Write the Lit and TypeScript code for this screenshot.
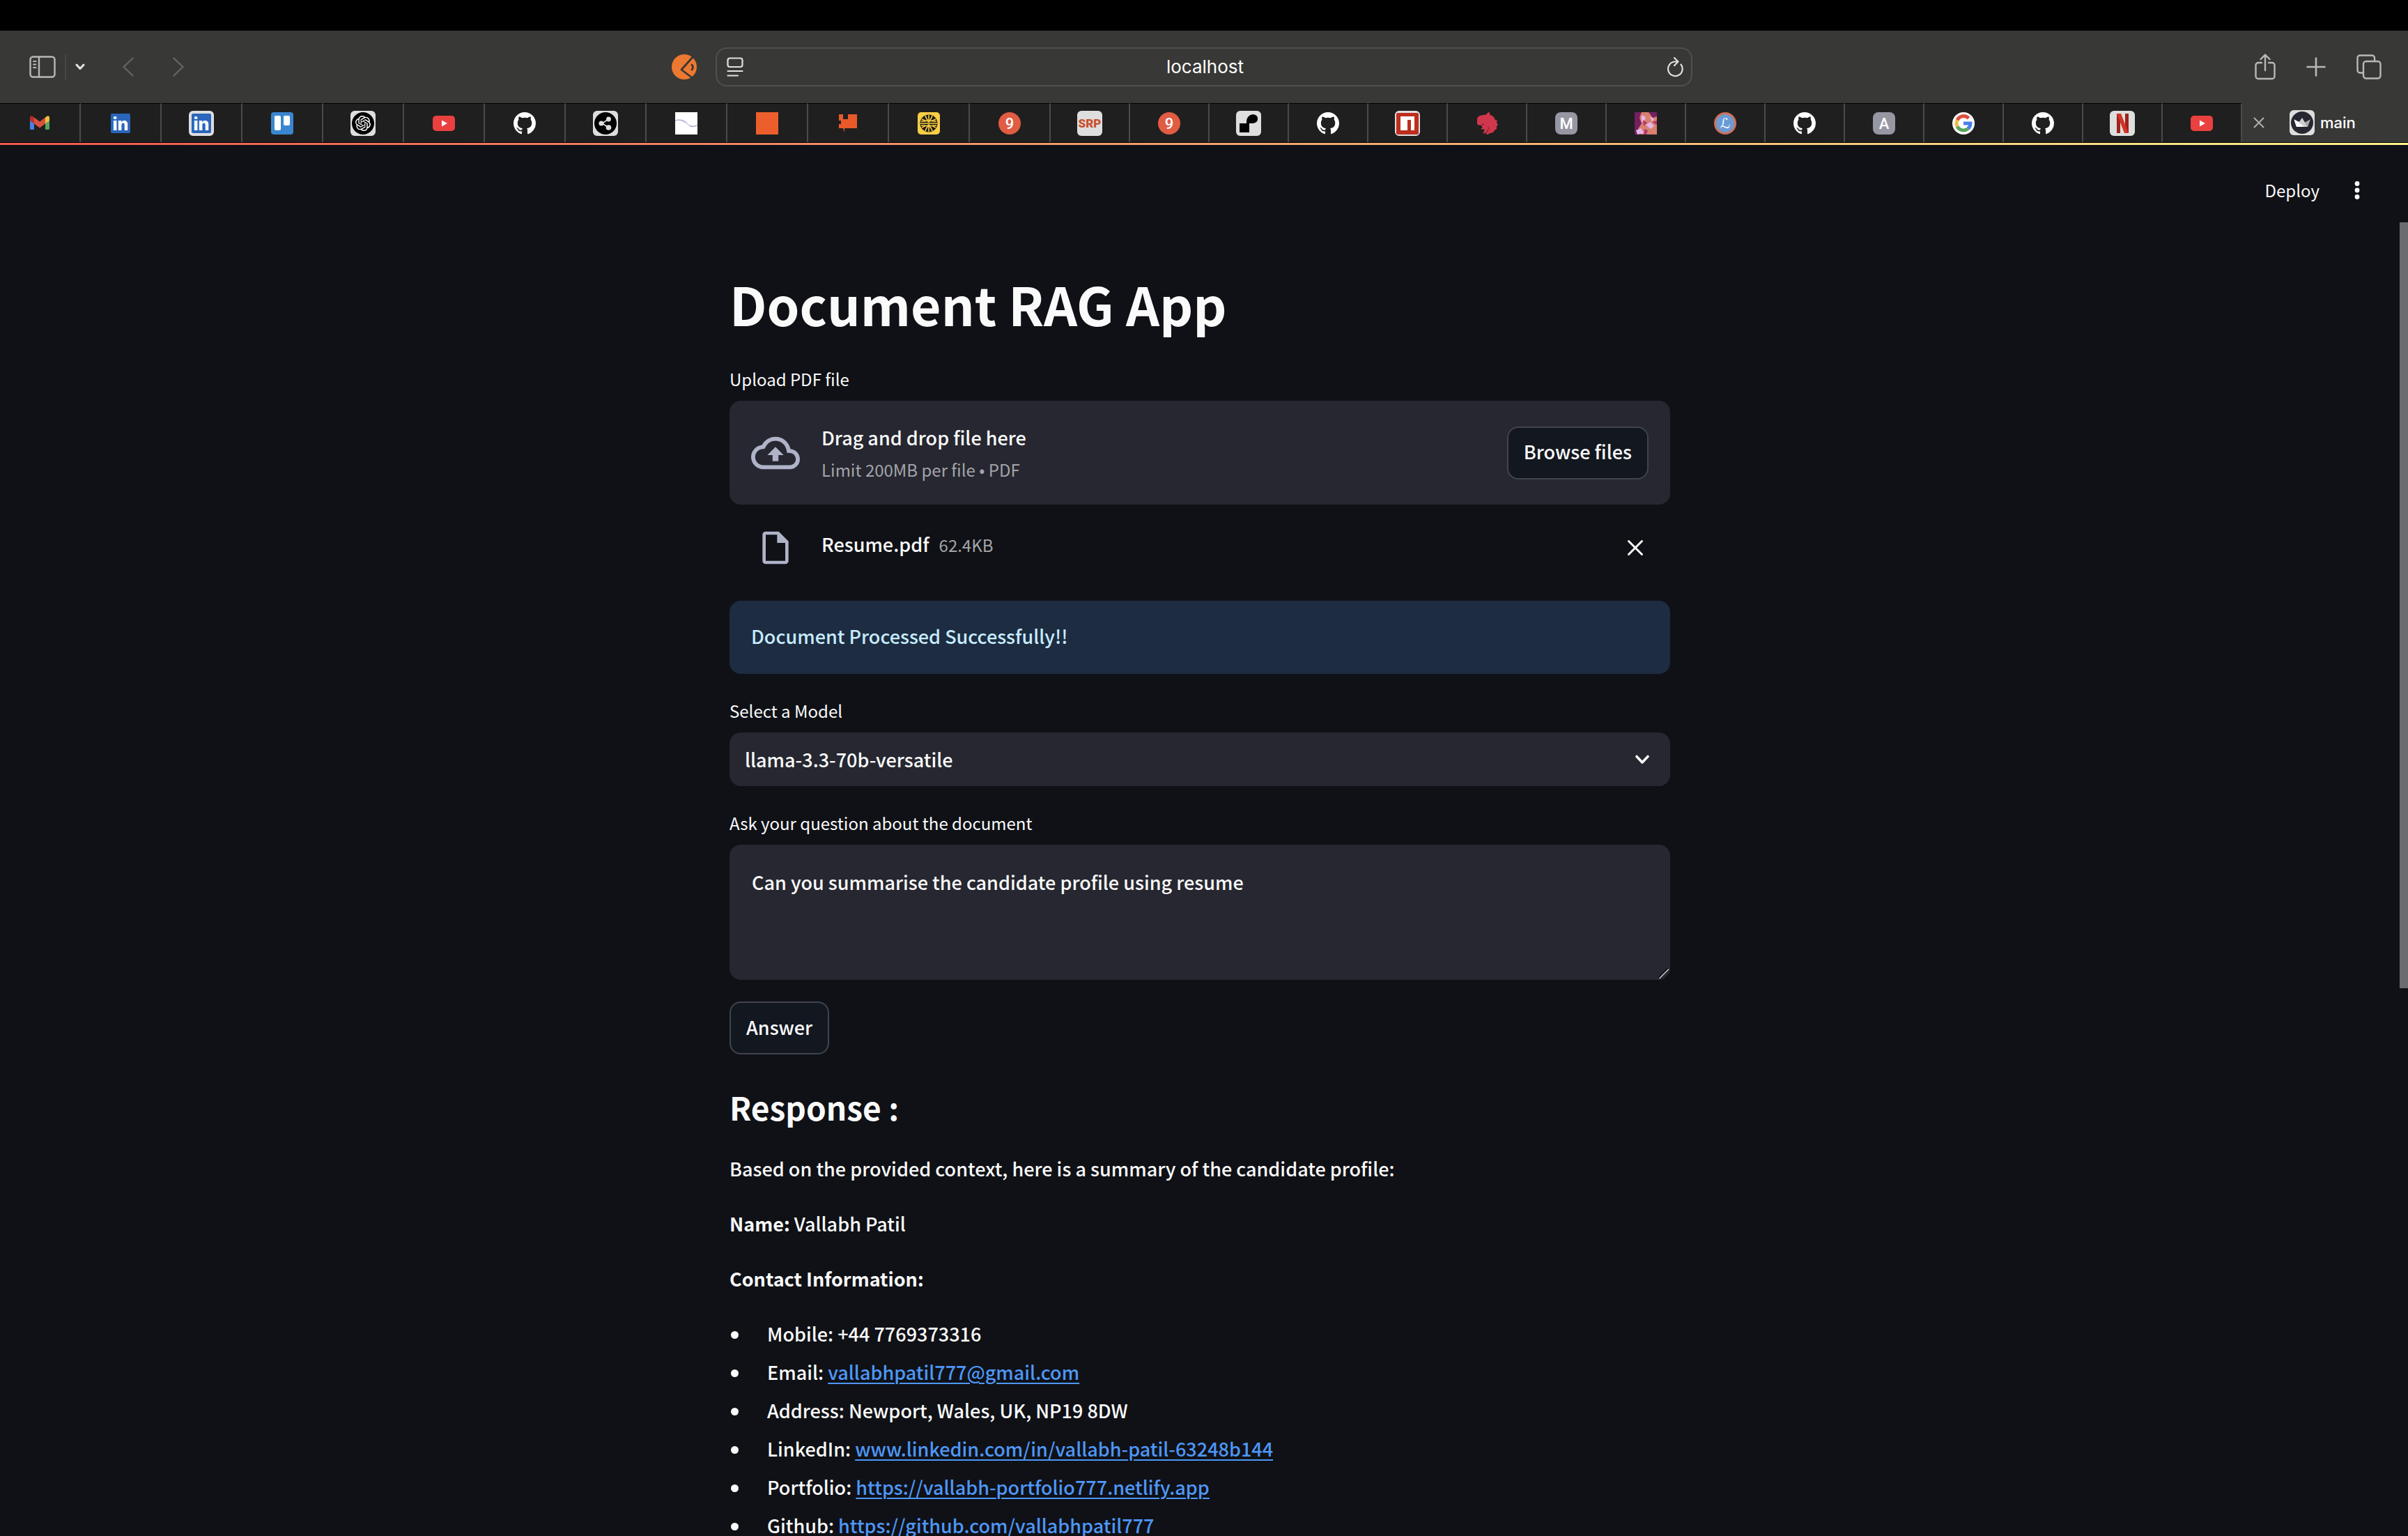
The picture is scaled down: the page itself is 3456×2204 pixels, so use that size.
import { LitElement, html, css, svg } from "lit";
import { customElement, property, state } from "lit/decorators.js";
import { classMap } from "lit/directives/class-map.js";

const GITHUB =
  "M8 0C3.58 0 0 3.58 0 8c0 3.54 2.29 6.53 5.47 7.59.4.07.55-.17.55-.38 0-.19-.01-.82-.01-1.49-2.01.37-2.53-.49-2.69-.94-.09-.23-.48-.94-.82-1.13-.28-.15-.68-.52-.01-.53.63-.01 1.08.58 1.23.82.72 1.21 1.87.87 2.33.66.07-.52.28-.87.51-1.07-1.78-.2-3.64-.89-3.64-3.95 0-.87.31-1.59.82-2.15-.08-.2-.36-1.02.08-2.12 0 0 .67-.21 2.2.82.64-.18 1.32-.27 2-.27s1.36.09 2 .27c1.53-1.04 2.2-.82 2.2-.82.44 1.1.16 1.92.08 2.12.51.56.82 1.27.82 2.15 0 3.07-1.87 3.75-3.65 3.95.29.25.54.73.54 1.48 0 1.07-.01 1.93-.01 2.2 0 .21.15.46.55.38A8.01 8.01 0 0 0 16 8c0-4.42-3.58-8-8-8z";
const KNOT =
  "M22.2819 9.8211a5.9847 5.9847 0 0 0-.5157-4.9108 6.0462 6.0462 0 0 0-6.5098-2.9A6.0651 6.0651 0 0 0 4.9807 4.1818a5.9847 5.9847 0 0 0-3.9977 2.9 6.0462 6.0462 0 0 0 .7427 7.0966 5.98 5.98 0 0 0 .511 4.9107 6.051 6.051 0 0 0 6.5146 2.9001A5.9847 5.9847 0 0 0 13.2599 24a6.0557 6.0557 0 0 0 5.7718-4.2058 5.9894 5.9894 0 0 0 3.9977-2.9001 6.0557 6.0557 0 0 0-.7475-7.0729zm-9.022 12.6081a4.4755 4.4755 0 0 1-2.8764-1.0408l.1419-.0804 4.7783-2.7582a.7948.7948 0 0 0 .3927-.6813v-6.7369l2.02 1.1686a.071.071 0 0 1 .038.052v5.5826a4.504 4.504 0 0 1-4.4945 4.4944zm-9.6607-4.1254a4.4708 4.4708 0 0 1-.5346-3.0137l.142.0852 4.783 2.7582a.7712.7712 0 0 0 .7806 0l5.8428-3.3685v2.3324a.0804.0804 0 0 1-.0332.0615L9.74 19.9502a4.4992 4.4992 0 0 1-6.1408-1.6464zM2.3408 7.8956a4.485 4.485 0 0 1 2.3655-1.9728V11.6a.7664.7664 0 0 0 .3879.6765l5.8144 3.3543-2.0201 1.1685a.0757.0757 0 0 1-.071 0l-4.8303-2.7865A4.504 4.504 0 0 1 2.3408 7.872zm16.5963 3.8558L13.1038 8.364 15.1192 7.2a.0757.0757 0 0 1 .071 0l4.8303 2.7913a4.4944 4.4944 0 0 1-.6765 8.1042v-5.6772a.79.79 0 0 0-.407-.667zm2.0107-3.0231l-.142-.0852-4.7735-2.7818a.7759.7759 0 0 0-.7854 0L9.409 9.2297V6.8974a.0662.0662 0 0 1 .0284-.0615l4.8303-2.7866a4.4992 4.4992 0 0 1 6.6802 4.66zM8.3065 12.863l-2.02-1.1638a.0804.0804 0 0 1-.038-.0567V6.0742a4.4992 4.4992 0 0 1 7.3757-3.4537l-.142.0805L8.704 5.459a.7948.7948 0 0 0-.3927.6813zm1.0976-2.3654l2.602-1.4998 2.6069 1.4998v2.9994l-2.5974 1.4997-2.6067-1.4997Z";

const plate = svg`<rect width="36" height="36" rx="6" fill="#dedede"/>`;

/* Favicons share a 36-unit square; bare icons fill the inner 32 units. */
const favicons: Record<string, unknown> = {
  gmail: svg`
    <path d="M4 11v14.500a1.500 1.500 0 0 0 1.500 1.500h4.500V16z" fill="#4a7fe8"/>
    <path d="M32 11v14.500a1.500 1.500 0 0 1-1.500 1.500H26V16z" fill="#58a65c"/>
    <path d="M26 9.500l2-1.600c1.800-1.300 4-.2 4 2V14l-6 4.600z" fill="#f1be42"/>
    <path d="M10 9.500L8 7.900C6.200 6.600 4 7.700 4 9.900V14l6 4.600z" fill="#b5302a"/>
    <path d="M10 9.500l8 6 8-6v9.100l-8 6-8-6z" fill="#d95040"/>`,
  linkedin: svg`<rect x="4" y="4" width="28" height="28" rx="2" fill="#2a66bc"/>
    <text class="in" x="18" y="28" font-size="25">in</text>`,
  linkedinPlate: svg`${plate}<rect x="4" y="4" width="28" height="28" rx="2" fill="#2a66bc"/>
    <text class="in" x="18" y="28" font-size="25">in</text>`,
  trello: svg`<rect x="2" y="2" width="32" height="32" rx="4" fill="#3a86d0"/>
    <rect x="7" y="7" width="9" height="21" rx="2" fill="#fff"/><rect x="20" y="7" width="9" height="14" rx="2" fill="#fff"/>`,
  knot: svg`${plate}<circle cx="18" cy="18" r="16" fill="#000"/>
    <path d="${KNOT}" fill="#fff" transform="translate(7 7) scale(.917)"/>`,
  youtube: svg`<rect x="2" y="7" width="32" height="22" rx="5" fill="#ea4040"/><path d="M15 13.500l8 4.500-8 4.500z" fill="#fff"/>`,
  github: svg`<path d="${GITHUB}" fill="#fff" transform="translate(2 2) scale(2)"/>`,
  share: svg`${plate}<circle cx="18" cy="18" r="16" fill="#000"/>
    <path d="M22 12l-8.500 6 8.500 6" fill="none" stroke="#dedede" stroke-width="1.600"/>
    <circle cx="12" cy="18" r="3.600" fill="#dedede"/><circle cx="22.500" cy="12" r="3.400" fill="#dedede"/><circle cx="22.500" cy="24" r="3.800" fill="#dedede"/>`,
  wave: svg`<rect x="2" y="2" width="32" height="32" fill="#fff"/>
    <path d="M2 14c6-2 12-2 17 3 4 4 8 5 15 3-5 5-11 4-16-1-5-4-9-6-16-5z" fill="#ded8ee"/>
    <path d="M2 14c6-2 11-1 16 3M34 20c-3 3-7 3-11 2" fill="none" stroke="#9f93c8"/>`,
  orange: svg`<rect x="2" y="2" width="32" height="32" fill="#ec5f2c"/>`,
  pixel: svg`<path d="M5 5h6v7h7V5h13v20H18l-5 0v6l-2-6H5v-6h3v-5H5z" fill="#e9592a"/>`,
  fan: svg`<rect x="2" y="2" width="32" height="32" rx="5" fill="#f8ce46"/>
    <circle cx="18" cy="18" r="12.500" fill="#1d1a10"/>
    <g fill="none" stroke="#f8ce46" stroke-width="1.600">
    <path d="M8 12c6 4 14 4 20 0M8 24c6-4 14-4 20 0"/>
    <path d="M13 7c1 4 3 6 5 9 2-3 4-5 5-9M18 6v9M13 29c1-4 3-6 5-9 2 3 4 5 5 9M18 30v-9"/>
    <path d="M6 18h24M7 15h6M7 21h6M23 15h6M23 21h6"/></g>`,
  nine: svg`<circle cx="18" cy="18" r="16" fill="#e05c43"/><text class="glyph" x="18" y="26" font-size="22">9</text>`,
  srp: svg`${plate}<text class="srp" x="18" y="24">SRP</text>`,
  drop: svg`${plate}<path d="M5 18h10c0-4 0-8 4-11 4-3 11-2 12 3 1 6-4 8-8 8h-4v13H5z" fill="#000"/>`,
  npm: svg`${plate}<rect x="2" y="3" width="32" height="31" rx="2" fill="#bd2e1f"/>
    <path d="M8 8h20v20h-5V13h-5v15H8z" fill="#fff"/>`,
  cat: svg`<path d="M4 12c0-4 5-6 10-6 2 0 4-1 5-3 1-1 2-1 3-1 0 2 0 3 1 4 4 1 6 4 7 7l3 1-1 3 2 3-2 2 0 4-3 2-2 3-4 1-4 2-3-1c4-3 6-9 3-12-3-3-7-2-9-1-2 1-4 1-6-1 0-2-0-4 0-7z" fill="#d0364c"/>
    <path d="M8 19c3 2 6 1 8-1 4 1 5 6 3 10-1 3-4 5-7 4 2-2 3-4 2-6-1 1-3 1-5 0 2-1 3-2 2-4-1-1-2-1-3-3z" fill="#d0364c"/>`,
  letterM: svg`<rect x="2" y="2" width="32" height="32" rx="8" fill="#9797a3"/><text class="glyph" x="18" y="26" font-size="22">M</text>`,
  letterA: svg`<rect x="2" y="2" width="32" height="32" rx="8" fill="#9797a3"/><text class="glyph" x="18" y="26" font-size="22">A</text>`,
  art: svg`<rect x="2" y="2" width="32" height="32" fill="#d9806e"/>
    <path d="M2 2h10l-3 8 3 8-5 8 4 8H2zM22 2h12v6l-6 2z" fill="#74205f"/>
    <path d="M12 6l6 3-2 6-4 1zM18 20l7-4 5 6-5 4zM4 28l7-3 5 7-10 2zM24 8l6 4-3 4z" fill="#e6b5ea"/>
    <path d="M16 26l5 2-2 6h-4zM27 16l7-2v6zM14 13l6 4-5 5z" fill="#b1396b"/>`,
  script: svg`<circle cx="18" cy="18" r="16" fill="#cf7159"/><circle cx="18" cy="18" r="13" fill="#6a9bd4"/>
    <text class="script" x="18" y="25">ℒ</text>`,
  google: svg`<circle cx="18" cy="18" r="16" fill="#fff"/>
    <g fill="none" stroke-width="5"><path d="M25.500 10.800A10 10 0 0 0 9.200 13.300" stroke="#d95040"/>
    <path d="M9.200 13.300a10 10 0 0 0 0 9.400" stroke="#f1be42"/>
    <path d="M9.200 22.700A10 10 0 0 0 24.500 25.700" stroke="#58a65c"/>
    <path d="M24.500 25.700A10 10 0 0 0 28 18H18" stroke="#4a7fe8"/></g>`,
  ribbon: svg`${plate}<path d="M10 4h5v28h-5zM22 4h5v28h-5z" fill="#9c241c"/><path d="M10 4h6l11 28h-6z" fill="#d33327"/>`,
  crown: svg`${plate}<circle cx="18" cy="18" r="16" fill="#262730"/>
    <path d="M6.500 13.500l7.500 3.500 8 7H10z" fill="#fff"/><path d="M18 11l-7 10 9 3h6z" fill="#d0d0d2"/>
    <path d="M6.500 13.500L21 23.500 10 24z" fill="#fff"/><path d="M30 13.300l-8 4.200 3.500 6.500H26z" fill="#a9a9ac"/>`,
};

@customElement("fav-icon")
class FavIcon extends LitElement {
  @property() name = "";
  static styles = css`
    :host { display: block; flex: none; width: 36px; height: 36px; }
    svg { display: block; width: 100%; height: 100%; }
    text { text-anchor: middle; fill: #fff; font-family: Inter, "Liberation Sans", sans-serif; font-weight: 500; }
    .in { font-weight: 800; }
    .glyph { font-family: Roboto, sans-serif; }
    .srp { font-family: Roboto, sans-serif; font-weight: 900; fill: #c9502f; font-size: 17px; }
    .script { font-family: "DejaVu Sans", serif; font-size: 20px; }
  `;
  render() {
    return html`<svg viewBox="0 0 36 36" aria-hidden="true">${favicons[this.name]}</svg>`;
  }
}

const TABS: [string, string][] = [
  ["gmail", "Mail"], ["linkedin", "LinkedIn"], ["linkedinPlate", "LinkedIn"], ["trello", "Trello"],
  ["knot", "ChatGPT"], ["youtube", "YouTube"], ["github", "GitHub"], ["share", "Share"],
  ["wave", "Wave"], ["orange", "Orange"], ["pixel", "Pixel"], ["fan", "Fan"], ["nine", "Nine"],
  ["srp", "SRP"], ["nine", "Nine"], ["drop", "Drop"], ["github", "GitHub"], ["npm", "npm"],
  ["cat", "Nest"], ["letterM", "M"], ["art", "Art"], ["script", "L"], ["github", "GitHub"],
  ["letterA", "A"], ["google", "Google"], ["github", "GitHub"], ["ribbon", "Netflix"], ["youtube", "YouTube"],
];
const WIDE_TABS = 13;

@customElement("browser-chrome")
class BrowserChrome extends LitElement {
  static styles = css`
    :host { display: block; flex: none; font-family: Inter, "Liberation Sans", sans-serif; color: #fff; }
    button { appearance: none; border: 0; margin: 0; padding: 0; background: none; color: inherit; font: inherit; display: flex; align-items: center; justify-content: center; }
    svg { display: block; fill: none; stroke: currentColor; stroke-linecap: round; stroke-linejoin: round; }
    .notch { height: 44px; background: #000; }
    .toolbar { display: grid; grid-template-columns: minmax(0, 1fr) minmax(0, 1402px) minmax(0, 1fr); align-items: center; height: 104px; background: #383836; color: #b8b8b6; }
    .left { display: flex; align-items: center; padding: 0 27px 0 42px; }
    .rule { width: 2px; height: 36px; margin: 0 13px; background: #484846; }
    .menu { color: #e4e4e2; margin-right: 54px; }
    .history { display: flex; gap: 56px; color: #646462; }
    .shield { margin-left: auto; }
    .address { display: flex; align-items: center; box-sizing: border-box; height: 56px; padding: 0 11px 0 14px; border: 2px solid #4f4f4d; border-radius: 16px; color: #e0e0de; }
    .address input { flex: 1; min-width: 0; border: 0; outline: 0; padding: 0; background: none; text-align: center; color: #fff; font: 400 26px/32px Inter, "Liberation Sans", sans-serif; }
    .right { display: flex; justify-content: flex-end; align-items: center; gap: 44px; padding-right: 38px; }
    .tabs { display: flex; height: 60px; box-sizing: border-box; background: linear-gradient(90deg, #f0574f, #f08c68 34%, #f7b874 66%, #fff48c) bottom / 100% 3px no-repeat #000; padding-bottom: 4px; }
    .tab { flex: 114 1 0; border-top: 1px solid #000; border-right: 2px solid #4a4a4a; background: #1f1f1f; }
    .tab.wide { flex-grow: 116; }
    .active { flex: none; width: 238px; display: flex; align-items: center; box-sizing: border-box; padding-left: 16px; background: #383836; font-weight: 500; font-size: 22px; line-height: 28px; color: #b0b0ae; }
    .active .name { display: flex; align-items: center; gap: 8px; margin-left: 36px; color: #fff; }
  `;
  render() {
    return html`
      <div class="notch"></div>
      <div class="toolbar">
        <div class="left">
          <button aria-label="Show sidebar">
            <svg width="38" height="32" viewBox="0 0 38 32" stroke-width="2.400">
              <rect x="1.500" y="1.500" width="35" height="29" rx="4"/><path d="M14 2v28"/><path d="M6 8h3.500M6 12.500h3.500M6 17h3.500" stroke-width="1.800"/>
            </svg>
          </button>
          <span class="rule"></span>
          <button class="menu" aria-label="Tab groups">
            <svg width="14" height="10" viewBox="0 0 14 10" stroke-width="3"><path d="M2 2l5 5.500L12 2"/></svg>
          </button>
          <div class="history">
            <button aria-label="Back"><svg width="16" height="28" viewBox="0 0 16 28" stroke-width="2.400"><path d="M14.500 1.500L1.500 14l13 12.500"/></svg></button>
            <button aria-label="Forward"><svg width="16" height="28" viewBox="0 0 16 28" stroke-width="2.400"><path d="M1.500 1.500l13 12.500-13 12.500"/></svg></button>
          </div>
          <button class="shield" aria-label="Extension">
            <svg width="36" height="36" viewBox="0 0 36 36">
              <circle cx="18" cy="18" r="18" fill="#ed7830" stroke="none"/>
              <path d="M31 3L14 22l16 12" stroke="#383836" stroke-width="2.800"/><path d="M29 15q3 3.500 0 7" stroke="#383836" stroke-width="2.800"/>
            </svg>
          </button>
        </div>
        <div class="address">
          <button aria-label="Reader">
            <svg width="24" height="28" viewBox="0 0 24 28" stroke-width="2.200"><rect x="1.500" y="1.500" width="21" height="12.500" rx="3"/><path d="M1.500 20h21M1.500 26.500H16"/></svg>
          </button>
          <input type="text" aria-label="Address" value="localhost" spellcheck="false">
          <button aria-label="Reload">
            <svg width="24" height="30" viewBox="0 0 24 30" stroke-width="2.200"><path d="M20.500 11.500A10.300 10.300 0 1 1 12 7.500h3.500"/><path d="M11 2l5.500 5.500L11 13"/></svg>
          </button>
        </div>
        <div class="right">
          <button aria-label="Share">
            <svg width="30" height="38" viewBox="0 0 30 38" stroke-width="2.400"><path d="M10 13H5a3.500 3.500 0 0 0-3.500 3.500v16A3.500 3.500 0 0 0 5 36h20a3.500 3.500 0 0 0 3.500-3.500v-16A3.500 3.500 0 0 0 25 13h-5M15 24V2M8.500 8L15 1.500 21.500 8"/></svg>
          </button>
          <button aria-label="New tab"><svg width="28" height="28" viewBox="0 0 28 28" stroke-width="2.600"><path d="M14 1.500v25M1.500 14h25"/></svg></button>
          <button aria-label="Tab overview">
            <svg width="36" height="36" viewBox="0 0 36 36" stroke-width="2.400"><rect x="10" y="10" width="24.500" height="24.500" rx="4"/><path d="M10 26.500H5A3.500 3.500 0 0 1 1.500 23V5A3.500 3.500 0 0 1 5 1.500h17.500A3.500 3.500 0 0 1 26 5v5"/></svg>
          </button>
        </div>
      </div>
      <nav class="tabs" aria-label="Tabs">
        ${TABS.map(([icon, title], i) => html`
          <button class=${classMap({ tab: true, wide: i < WIDE_TABS })} aria-label=${title}><fav-icon name=${icon}></fav-icon></button>`)}
        <div class="active">
          <button aria-label="Close tab"><svg width="16" height="16" viewBox="0 0 16 16" stroke-width="2"><path d="M1.500 1.500l13 13M14.500 1.500l-13 13"/></svg></button>
          <button class="name"><fav-icon name="crown"></fav-icon>main</button>
        </div>
      </nav>`;
  }
}

interface Contact { label: string; text: string; href?: string }
const CONTACTS: Contact[] = [
  { label: "Mobile", text: "+44 7769373316" },
  { label: "Email", text: "vallabhpatil777@gmail.com", href: "mailto:vallabhpatil777@gmail.com" },
  { label: "Address", text: "Newport, Wales, UK, NP19 8DW" },
  { label: "LinkedIn", text: "www.linkedin.com/in/vallabh-patil-63248b144", href: "https://www.linkedin.com/in/vallabh-patil-63248b144" },
  { label: "Portfolio", text: "https://vallabh-portfolio777.netlify.app", href: "https://vallabh-portfolio777.netlify.app" },
  { label: "Github", text: "https://github.com/vallabhpatil777", href: "https://github.com/vallabhpatil777" },
];

@customElement("app-root")
class AppRoot extends LitElement {
  @state() private question = "Can you summarise the candidate profile using resume";

  static styles = css`
    :host { display: flex; flex-direction: column; height: 100vh; overflow: hidden; background: #0f1116; color: #fafafa; font: 500 27px/48px "Noto Sans CJK JP", "Noto Sans CJK SC", sans-serif; }
    button, select, textarea { appearance: none; margin: 0; border: 0; padding: 0; background: none; color: inherit; font: inherit; outline: 0; }
    button { display: flex; align-items: center; justify-content: center; }
    svg { display: block; flex: none; }
    .viewport { flex: 1; min-height: 0; display: grid; grid-template-columns: minmax(0, 1fr) 12px; overflow: hidden; }
    .scroll { padding-top: 111px; }
    .thumb { height: 58%; min-height: 40px; background: #6b6c6f; }
    .header { display: flex; justify-content: flex-end; align-items: center; gap: 32px; height: 130px; padding: 0 39px 0 0; box-sizing: border-box; }
    .deploy { font-size: 24px; line-height: 36px; font-weight: 400; }
    .more { width: 44px; height: 44px; }
    .column { width: min(1350px, 100% - 64px); margin: 0 auto; padding-top: 54px; }
    h1 { margin: 0 0 46px; font-weight: 700; font-size: 75px; line-height: 88px; }
    h2 { margin: 45px 0 35px; font-weight: 700; font-size: 46px; line-height: 60px; }
    p { margin: 0 0 31px; }
    b { font-weight: 700; }
    label { display: block; margin: 35px 0 13px; font-size: 24px; line-height: 36px; font-weight: 400; }
    h1 + label { margin-top: 0; }
    .small { color: #a3a4a8; font-size: 24px; line-height: 44px; font-weight: 400; }
    .btn { box-sizing: border-box; height: 76px; padding: 0 22px 3px; border: 2px solid #41444c; border-radius: 16px; background: #131720; }
    .drop { display: flex; align-items: center; gap: 31px; box-sizing: border-box; height: 149px; padding: 0 31px; border-radius: 16px; background: #262730; }
    .drop .btn, .file .remove { margin-left: auto; }
    .tint { color: #b0b3c8; }
    .file { display: flex; align-items: center; gap: 31px; margin: 24px 0 38px; height: 76px; padding: 0 31px; }
    .file .slot { display: flex; justify-content: center; width: 70px; }
    .file .name { display: flex; align-items: baseline; gap: 14px; padding-bottom: 10px; }
    .remove { width: 38px; height: 38px; }
    .info { padding: 27px 31px 30px; border-radius: 16px; background: #1d2c40; color: #c7ebff; }
    .select, .ask { display: grid; align-items: center; }
    .select > *, .ask > * { grid-area: 1 / 1; }
    .select select { width: 100%; height: 77px; padding: 0 22px; border-radius: 16px; background: #262730; }
    .select svg { justify-self: end; margin-right: 30px; pointer-events: none; }
    textarea { display: block; box-sizing: border-box; width: 100%; height: 194px; padding: 30px 32px; border-radius: 16px; background: #262730; resize: none; }
    .grip { place-self: end; margin: 0 1px 1px 0; pointer-events: none; }
    .answer { margin-top: 31px; }
    ul { list-style: none; margin: 30px 0 0; padding: 0; display: grid; gap: 7px; }
    li { display: flex; align-items: center; }
    li::before { content: ""; width: 11px; height: 11px; margin: 2px 41px 0 2px; border-radius: 50%; background: currentColor; }
    a { color: #4e97f7; text-underline-offset: 4px; text-decoration-thickness: 2px; }
  `;

  render() {
    return html`
      <browser-chrome></browser-chrome>
      <div class="viewport">
        <main>
          <header class="header">
            <button class="deploy">Deploy</button>
            <button class="more" aria-label="Main menu">
              <svg width="44" height="44" viewBox="0 0 44 44" fill="currentColor"><circle cx="22" cy="12.500" r="3.400"/><circle cx="22" cy="22" r="3.400"/><circle cx="22" cy="31.500" r="3.400"/></svg>
            </button>
          </header>
          <div class="column">
            <h1>Document RAG App</h1>
            <label for="upload">Upload PDF file</label>
            <section class="drop">
              <svg class="tint" width="70" height="70" viewBox="0 0 24 24" fill="currentColor"><path d="M19.350 10.040A7.490 7.490 0 0 0 12 4C9.110 4 6.600 5.640 5.350 8.040A5.994 5.994 0 0 0 0 14c0 3.310 2.690 6 6 6h13c2.760 0 5-2.240 5-5 0-2.640-2.050-4.780-4.650-4.960zM19 18H6c-2.210 0-4-1.790-4-4 0-2.050 1.530-3.760 3.560-3.970l1.070-.11.5-.95A5.469 5.469 0 0 1 12 6c2.620 0 4.880 1.860 5.390 4.430l.3 1.500 1.530.11A2.980 2.980 0 0 1 22 15c0 1.650-1.350 3-3 3zM8 13h2.550v3h2.900v-3H16l-4-4z"/></svg>
              <div>
                <div>Drag and drop file here</div>
                <div class="small">Limit 200MB per file • PDF</div>
              </div>
              <button class="btn" id="upload">Browse files</button>
            </section>
            <div class="file">
              <span class="slot tint"><svg width="56" height="56" viewBox="0 0 24 24" fill="currentColor"><path d="M14 2H6c-1.100 0-1.990.9-1.990 2L4 20c0 1.100.89 2 1.990 2H18c1.100 0 2-.9 2-2V8l-6-6zM6 20V4h7v5h5v11H6z"/></svg></span>
              <div class="name"><span>Resume.pdf</span><span class="small">62.4KB</span></div>
              <button class="remove" aria-label="Remove file">
                <svg width="24" height="24" viewBox="0 0 24 24" fill="none" stroke="currentColor" stroke-width="3" stroke-linecap="round"><path d="M2.500 2.500l19 19M21.500 2.500l-19 19"/></svg>
              </button>
            </div>
            <div class="info" role="status">Document Processed Successfully!!</div>
            <label for="model">Select a Model</label>
            <div class="select">
              <select id="model"><option>llama-3.3-70b-versatile</option></select>
              <svg width="20" height="14" viewBox="0 0 20 14" fill="none" stroke="currentColor" stroke-width="3.600" stroke-linecap="round" stroke-linejoin="round"><path d="M2 2.500l8 8.500 8-8.500"/></svg>
            </div>
            <label for="question">Ask your question about the document</label>
            <div class="ask">
              <textarea id="question" spellcheck="false" .value=${this.question} @input=${(e: Event) => (this.question = (e.target as HTMLTextAreaElement).value)}></textarea>
              <svg class="grip" width="16" height="16" viewBox="0 0 16 16" fill="none"><path d="M0 14L14 0" stroke="#111216" stroke-width="2"/><path d="M1.500 15L15 1.500" stroke="#c4c4c8" stroke-width="1.600"/><path d="M9 15l6-6" stroke="#111216" stroke-width="1.600"/></svg>
            </div>
            <button class="btn answer">Answer</button>
            <h2>Response :</h2>
            <p>Based on the provided context, here is a summary of the candidate profile:</p>
            <p><b>Name:</b> Vallabh Patil</p>
            <p><b>Contact Information:</b></p>
            <ul>
              ${CONTACTS.map((c) => html`<li><span>${c.label}: ${c.href ? html`<a href=${c.href}>${c.text}</a>` : c.text}</span></li>`)}
            </ul>
          </div>
        </main>
        <div class="scroll"><div class="thumb"></div></div>
      </div>`;
  }
}
